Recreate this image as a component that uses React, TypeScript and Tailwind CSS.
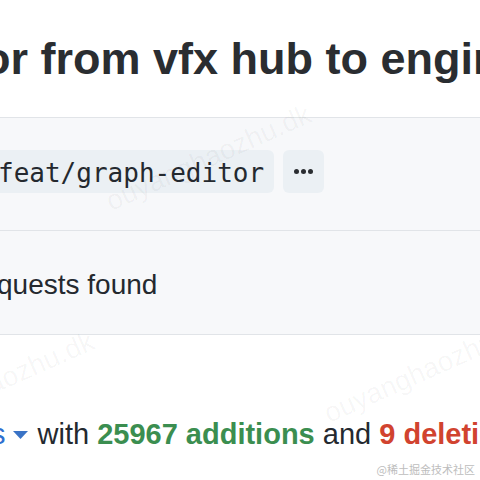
import type { ReactNode } from "react";

const sans = { fontFamily: '"Liberation Sans", Arial, sans-serif' };

function Watermark({ left, top }: { left: number; top: number }) {
  return (
    <span
      className="pointer-events-none absolute whitespace-nowrap text-[28px] leading-[28px] text-black/[0.04] -rotate-[24deg]"
      style={{ left, top }}
    >
      ouyanghaozhu.dk
    </span>
  );
}

function Panel({ children, className }: { children: ReactNode; className: string }) {
  return (
    <div className={"border-b border-[#e1e4e8] bg-[#f7f8fa] " + className}>{children}</div>
  );
}

export default function App() {
  return (
    <div
      className="relative h-[480px] w-[480px] overflow-hidden bg-white text-[#24292f]"
      style={sans}
    >
      <div className="h-[118px] border-b border-[#e1e4e8] pt-[36px]">
        <h1 className="-ml-[17px] whitespace-nowrap text-[45px] font-bold leading-[45px] text-[#2a2d31]">
          or from vfx hub to engine
        </h1>
      </div>

      <Panel className="h-[113px] pt-[32px]">
        <div className="flex items-center gap-[9px]">
          <div className="-ml-[12px] flex h-[43px] shrink-0 items-center rounded-md bg-[#ebf0f4] pl-[10px] pr-[10px] pt-[3px]">
            <span className="whitespace-nowrap font-['DejaVu_Sans_Mono',monospace] text-[26px] leading-none text-[#24292f]">
              feat/graph-editor
            </span>
          </div>
          <div className="flex h-[43px] w-[41px] shrink-0 items-center justify-center gap-[2px] rounded-md bg-[#ebf0f4]">
            <span className="h-[5px] w-[5px] rounded-full bg-[#2a2d31]" />
            <span className="h-[5px] w-[5px] rounded-full bg-[#2a2d31]" />
            <span className="h-[5px] w-[5px] rounded-full bg-[#2a2d31]" />
          </div>
        </div>
      </Panel>

      <Panel className="h-[104px] pt-[40px]">
        <p className="-ml-[3px] whitespace-nowrap text-[28px] leading-[28px] text-[#24292f]">
          quests found
        </p>
      </Panel>

      <div className="pt-[85px]">
        <p className="-ml-[9px] flex w-max items-baseline whitespace-nowrap text-[29px] leading-[29px] text-[#24292f]">
          <span className="text-[#2f6fcf]">s</span>
          <svg
            width="15"
            height="8"
            viewBox="0 0 15 8"
            className="ml-[7px] mr-[10px] shrink-0 self-center"
          >
            <path d="M0 0h15L7.5 8z" fill="#3a73c6" />
          </svg>
          <span>with&nbsp;</span>
          <span className="font-bold text-[#3b8e50]">25967 additions</span>
          <span>&nbsp;and&nbsp;</span>
          <span className="font-bold text-[#d1432f]">9 deletions</span>
        </p>
      </div>

      <div
        className="absolute bottom-[4px] right-[5px] text-[11px] leading-[14px] text-[#bdbdbd]"
        style={{ fontFamily: '"Noto Sans CJK SC", sans-serif' }}
      >
        @稀土掘金技术社区
      </div>

      <Watermark left={98} top={144} />
      <Watermark left={-119} top={371} />
      <Watermark left={316} top={356} />
    </div>
  );
}
